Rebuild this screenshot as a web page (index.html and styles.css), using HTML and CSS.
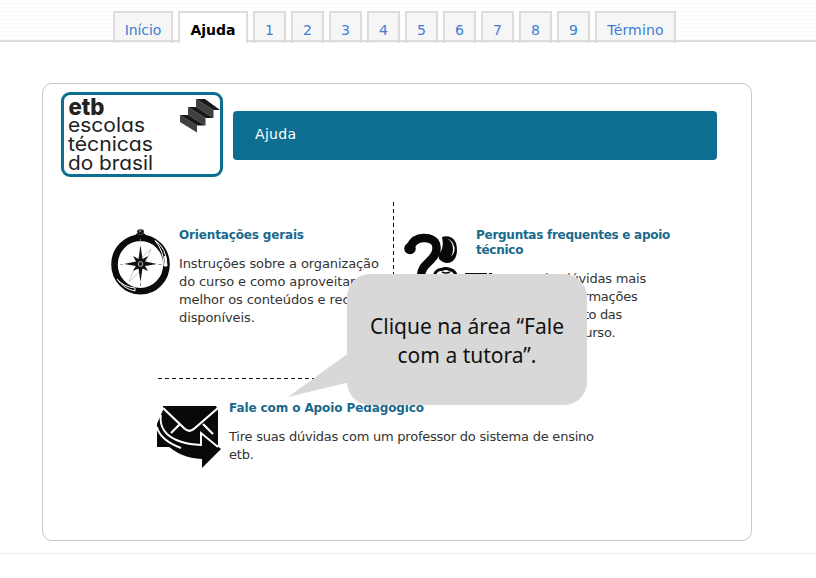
FILE: index.html
```html
<!DOCTYPE html>
<html lang="pt-BR">
<head>
<meta charset="utf-8">
<title>Ajuda</title>
<link rel="stylesheet" href="styles.css">
</head>
<body>
<nav class="tabs">
<a class="tab wide">Início</a><a class="tab active">Ajuda</a><a class="tab">1</a><a class="tab">2</a><a class="tab">3</a><a class="tab">4</a><a class="tab">5</a><a class="tab">6</a><a class="tab">7</a><a class="tab">8</a><a class="tab">9</a><a class="tab last">Término</a>
</nav>
<main class="card">
  <header class="head">
    <div class="logo">
      <svg width="156" height="79" viewBox="64 95 156 79">
        <g class="logo-text">
          <text class="logo-bold" x="68.500" y="115" textLength="36" lengthAdjust="spacingAndGlyphs">etb</text>
          <text x="68" y="132" textLength="77" lengthAdjust="spacingAndGlyphs">escolas</text>
          <text x="68" y="151" textLength="85" lengthAdjust="spacingAndGlyphs">técnicas</text>
          <text x="68" y="170" textLength="85" lengthAdjust="spacingAndGlyphs">do brasil</text>
        </g>
        <path fill="#404040" d="M180 115 197 125.500V132.500L180 122zM188 107 205.500 118V125.500L188 115zM196 99 213.500 110V118L196 107z"/>
        <path fill="#181818" d="M180 115H188L205.500 125.500H197zM188 107H196L213.500 118H205.500zM196 99H205L220 110H213.500z"/>
      </svg>
    </div>
    <h1 class="bar">Ajuda</h1>
  </header>
  <section class="topics">
    <article class="topic general">
      <svg class="compass" width="60" height="68" viewBox="0 0 60 68">
        <ellipse cx="29.500" cy="3.500" rx="3.500" ry="2.300" fill="#222"/><path d="M28 3h2" stroke="#bbb"/>
        <path d="M25 7q4.500-3 9 0" fill="none" stroke="#111" stroke-width="2"/>
        <ellipse cx="29.500" cy="36.500" rx="26" ry="26.700" fill="#fff" stroke="#0b0b0b" stroke-width="6.600"/>
        <path d="M44 12.500q11.500 7 12 25.500h-3q0-15-9-25.500z" fill="#0b0b0b" stroke="#fff" stroke-width="1"/>
        <path d="M53 28q1 5 0 10h3q0-6-1-10z" fill="#fff"/>
        <path d="M6 51q7 10 18 12v-3q-11-1-18-9z" fill="#0b0b0b" stroke="#fff" stroke-width="1"/>
        <path d="M40 21 26 34 18 54 33 39z" fill="none" stroke="#bbb" stroke-width=".8"/>
        <path d="M29.500 17 31.500 31 37 28 34 33.500 46 36 34 38 37 43 31.500 40.500 29.500 54 27.500 40.500 22 43 25 38 13 36 25 33.500 22 28 27.500 31z" fill="#111"/>
        <circle cx="29.500" cy="36" r="2.300" fill="#111" stroke="#ddd" stroke-width=".8"/>
        <path d="M29.500 11v3m0 44v-3M9.500 36.500h2m36 0h3" stroke="#888"/>
      </svg>
      <div class="copy">
        <h2>Orientações gerais</h2>
        <p>Instruções sobre a organização<br>do curso e como aproveitar<br>melhor os conteúdos e recursos<br>disponíveis.</p>
      </div>
    </article>
    <article class="topic faq">
      <svg class="question" width="60" height="70" viewBox="404 232 60 70">
        <path d="M410 247Q415 237 425 238 439 239 436 252C433 262 421 264 421 276" fill="none" stroke="#080808" stroke-width="8.500" stroke-linecap="round"/>
        <circle cx="410" cy="248.500" r="5.800" fill="#080808"/>
        <path d="M442 237Q452 234 456 243 459 255 453 261 446 266 439 259 438 255 441 251 444 246 442 237z" fill="#080808"/>
        <path d="M447 238.500q6 3 6 11 0 4-2 7 4-3 3.500-9-1.500-7-7.500-9z" fill="#fff"/>
        <path d="M434 276q2-7 8-6.500 3-2 8 0 6 2 6 6.500z" fill="#fff" stroke="#080808" stroke-width="3"/>
        <path d="M442 272q4 2 8 0" stroke="#080808" stroke-width="1.500" fill="none"/>
        <path d="M465 273.500H487M489 273.500h3" stroke="#111"/>
      </svg>
      <div class="copy">
        <h2>Perguntas frequentes e apoio<br>técnico</h2>
        <p>Respostas às dúvidas mais<br>frequentes e informações<br><span class="tight">sobre o andamento das</span><br>ferramentas do curso.</p>
      </div>
    </article>
  </section>
  <section class="contact">
    <svg class="mail" width="65" height="63" viewBox="157 406 65 63">
      <path d="M163 407H216L218 411V446L205 448H157V425L163 411z" fill="#090909"/>
      <path d="M163 409 185 430Q190 434 195 429L218 409M180 425 171 434M203 425 213 435" fill="none" stroke="#fff" stroke-width="2.200"/>
      <path d="M157 449H170L186 458 196 461V469H157z" fill="#fff"/>
      <path d="M160 418Q157 428 163 434 175 447 201 447V434L221 450 202 469V460Q180 459 166 445 157 437 157 426z" fill="#090909"/>
      <path d="M161 416Q159 427 167 435 178 445 201 446V434L218 448M157 428Q160 441 181 449" fill="none" stroke="#fff" stroke-width="1.900"/>
    </svg>
    <div class="copy">
      <h2>Fale com o Apoio Pedagógico</h2>
      <p>Tire suas dúvidas com um professor do sistema de ensino<br>etb.</p>
    </div>
  </section>
</main>
<aside class="bubble">
  <svg class="tail" width="62" height="46" viewBox="0 0 62 46"><path d="M62 0 0 45 62 30z" fill="#d8d8d8"/></svg>
  <p>Clique na área “Fale<br>com a tutora”.</p>
</aside>
</body>
</html>
```
FILE: styles.css
```css
* { box-sizing: border-box; }
body {
  margin: 0;
  height: 578px;
  overflow: hidden;
  background: linear-gradient(#ececec, #ececec) 0 553px / 100% 1px no-repeat #fff;
  font-family: Verdana, "DejaVu Sans", sans-serif;
  color: #333;
}
h1, h2, p { margin: 0; }
.tabs {
  display: flex;
  gap: 5px;
  height: 43px;
  padding: 11px 0 0 113px;
  background: linear-gradient(#dcdcdc, #dcdcdc) 0 40px / 100% 2px no-repeat,
    repeating-linear-gradient(#fff 0 3px, #fafafa 3px 4px) 0 0 / 100% 40px no-repeat;
}
.tab {
  width: 33px;
  height: 32px;
  border: 2px solid #dcdcdc;
  border-bottom: 0;
  background: linear-gradient(#dcdcdc, #dcdcdc) 0 27px / 100% 2px no-repeat, #f6f6f6;
  color: #3b80d5;
  font-size: 14px;
  line-height: 34px;
  text-align: center;
  white-space: nowrap;
}
.tab.wide { width: 60px; letter-spacing: -.1px; }
.tab.active { width: 70px; background: #fff; color: #000; font-weight: bold; }
.tab.last { width: 81px; letter-spacing: .15px; }
.card {
  width: 710px;
  height: 458px;
  margin: 40px 0 0 42px;
  padding: 8px 0 0 18px;
  border: 1px solid #c9c9c9;
  border-radius: 10px;
}
.head { display: flex; gap: 10px; }
.logo {
  width: 162px;
  height: 85px;
  border: 3px solid #0d6e91;
  border-radius: 9px;
}
.logo svg { display: block; }
.logo-text {
  font-family: Inter, sans-serif;
  font-size: 20px;
  font-weight: 400;
  font-feature-settings: "cv11";
  fill: #222;
}
.logo-bold { font-size: 23px; font-weight: 800; }
.bar {
  width: 484px;
  height: 49px;
  margin-top: 19px;
  padding-left: 22px;
  border-radius: 4px;
  background: #0d6e91;
  color: #fff;
  font-size: 14px;
  font-weight: normal;
  letter-spacing: .3px;
  line-height: 46px;
}
.topics { display: grid; grid-template-columns: 285px 303px; margin: 25px 0 0 48px; }
.topic { display: flex; height: 176px; padding-top: 26px; }
.general {
  gap: 8px;
  padding-left: 2px;
  background: repeating-linear-gradient(#111 0 4px, transparent 4px 7px) 284px 0 / 1px 100% no-repeat;
}
.faq { gap: 12px; padding-left: 10px; }
.compass { flex: none; }
.question { margin-top: 4px; flex: none; overflow: visible; }
.copy { white-space: nowrap; }
h2 { color: #19698c; font-size: 12px; line-height: 15px; letter-spacing: -.15px; }
.faq h2 { letter-spacing: -.27px; }
.copy p { margin-top: 12px; font-size: 13px; line-height: 18px; letter-spacing: -.2px; }
.general .copy p { letter-spacing: -.1px; }
.tight { letter-spacing: -.38px; }
.contact {
  display: flex;
  gap: 7px;
  width: 460px;
  margin-left: 96px;
  padding: 23px 0 0;
  background: repeating-linear-gradient(90deg, #111 0 4px, transparent 4px 7px) 1px 0 / 236px 1px no-repeat;
}
.contact .copy p { letter-spacing: -.23px; }
.contact h2 { letter-spacing: -.1px; }
.mail { margin-top: 4px; flex: none; }
.bubble {
  position: absolute;
  left: 347px;
  top: 274px;
  width: 240px;
  height: 131px;
  padding-top: 38px;
  border-radius: 23px;
  background: #d8d8d8;
  color: #111;
  text-align: center;
  font: 21px/29px "Noto Sans", sans-serif;
}
.tail { position: absolute; left: -59px; top: 78px; }
```
